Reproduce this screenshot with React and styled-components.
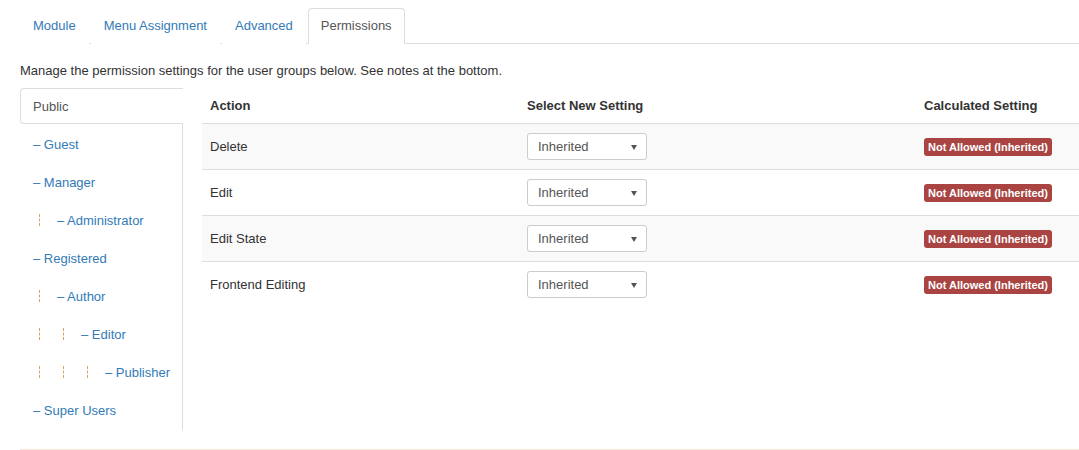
import React from 'react';
import styled, { createGlobalStyle } from 'styled-components';

const GlobalStyle = createGlobalStyle`
  body {
    margin: 0;
    background: #fff;
    font-family: "Liberation Sans", Arial, sans-serif;
    font-size: 13px;
    color: #333;
  }
`;

const Page = styled.div`
  padding: 8px 0 0 20px;
  width: 1059px;
  overflow: hidden;
`;

const Tabs = styled.ul`
  display: flex;
  gap: 2px;
  list-style: none;
  margin: 0;
  padding: 0;
  border-bottom: 1px solid #ddd;
`;

const Tab = styled.li`
  padding: 0 12px;
  height: 34px;
  line-height: 34px;
  margin-bottom: -1px;
  border: 1px solid ${p => (p.$active ? '#ddd' : 'transparent')};
  border-bottom-color: ${p => (p.$active ? '#fff' : 'transparent')};
  border-radius: 4px 4px 0 0;
  background: #fff;
  color: ${p => (p.$active ? '#555' : '#337ab7')};
`;

const Intro = styled.p`
  margin: 18px 0 8px;
  font-size: 13px;
  line-height: 18px;
  color: #333;
`;

const Body = styled.div`
  display: flex;
  gap: 19px;
  align-items: flex-start;
`;

const Nav = styled.ul`
  list-style: none;
  margin: 0;
  padding: 0;
  width: 163px;
  flex-shrink: 0;
  border-right: 1px solid #ddd;
  box-sizing: border-box;
`;

const NavItem = styled.li`
  display: flex;
  align-items: center;
  box-sizing: border-box;
  height: 36px;
  margin-bottom: 2px;
  padding-left: 12px;
  margin-right: ${p => (p.$active ? '-1px' : '0')};
  border: 1px solid ${p => (p.$active ? '#ddd' : 'transparent')};
  border-right: none;
  border-radius: 4px 0 0 4px;
  background: #fff;
  color: ${p => (p.$active ? '#555' : '#337ab7')};
  white-space: nowrap;
`;

const Level = styled.span`
  display: inline-block;
  width: 24px;
  height: 14px;
  flex-shrink: 0;
  &::before {
    content: '';
    display: block;
    margin-left: 6px;
    margin-top: 1px;
    height: 12px;
    border-left: 1px dashed #d9a25e;
  }
`;

const Table = styled.div`
  flex: 1;
  min-width: 877px;
`;

const Row = styled.div`
  display: grid;
  grid-template-columns: 317px 397px 163px;
  align-items: center;
  height: ${p => (p.$head ? '35px' : '45px')};
  border-top: ${p => (p.$head ? 'none' : '1px solid #ddd')};
  background: ${p => (p.$striped ? '#f9f9f9' : '#fff')};
`;

const Cell = styled.div`
  padding: 0 8px;
  font-weight: ${p => (p.$head ? 'bold' : 'normal')};
  color: #333;
`;

const Select = styled.div`
  position: relative;
  width: 120px;
  height: 27px;
  box-sizing: border-box;
  border: 1px solid #ccc;
  border-radius: 3px;
  background: #fff;
  padding-left: 10px;
  line-height: 25px;
  color: #555;
  &::after {
    content: '';
    position: absolute;
    right: 9px;
    top: 11px;
    border-left: 3px solid transparent;
    border-right: 3px solid transparent;
    border-top: 5px solid #555;
  }
`;

const Badge = styled.span`
  display: inline-block;
  padding: 0 4px;
  height: 18px;
  line-height: 18px;
  border-radius: 3px;
  background: #a94442;
  color: #fff;
  font-size: 11px;
  font-weight: bold;
  white-space: nowrap;
`;

const Footer = styled.hr`
  margin: 19px 0 0;
  border: none;
  border-top: 1px solid #f5ead9;
`;

const groups = [
  { name: 'Public', level: -1 },
  { name: 'Guest', level: 0 },
  { name: 'Manager', level: 0 },
  { name: 'Administrator', level: 1 },
  { name: 'Registered', level: 0 },
  { name: 'Author', level: 1 },
  { name: 'Editor', level: 2 },
  { name: 'Publisher', level: 3 },
  { name: 'Super Users', level: 0 },
];

const actions = ['Delete', 'Edit', 'Edit State', 'Frontend Editing'];

export default function App() {
  return (
    <>
      <GlobalStyle />
      <Page>
        <Tabs>
          <Tab>Module</Tab>
          <Tab>Menu Assignment</Tab>
          <Tab>Advanced</Tab>
          <Tab $active>Permissions</Tab>
        </Tabs>
        <Intro>Manage the permission settings for the user groups below. See notes at the bottom.</Intro>
        <Body>
          <Nav>
            {groups.map(g => (
              <NavItem key={g.name} $active={g.level < 0}>
                {Array.from({ length: Math.max(g.level, 0) }).map((_, i) => (
                  <Level key={i} />
                ))}
                {g.level < 0 ? g.name : `– ${g.name}`}
              </NavItem>
            ))}
          </Nav>
          <Table>
            <Row $head>
              <Cell $head>Action</Cell>
              <Cell $head>Select New Setting</Cell>
              <Cell $head>Calculated Setting</Cell>
            </Row>
            {actions.map((a, i) => (
              <Row key={a} $striped={i % 2 === 0}>
                <Cell>{a}</Cell>
                <Cell>
                  <Select>Inherited</Select>
                </Cell>
                <Cell>
                  <Badge>Not Allowed (Inherited)</Badge>
                </Cell>
              </Row>
            ))}
          </Table>
        </Body>
        <Footer />
      </Page>
    </>
  );
}
